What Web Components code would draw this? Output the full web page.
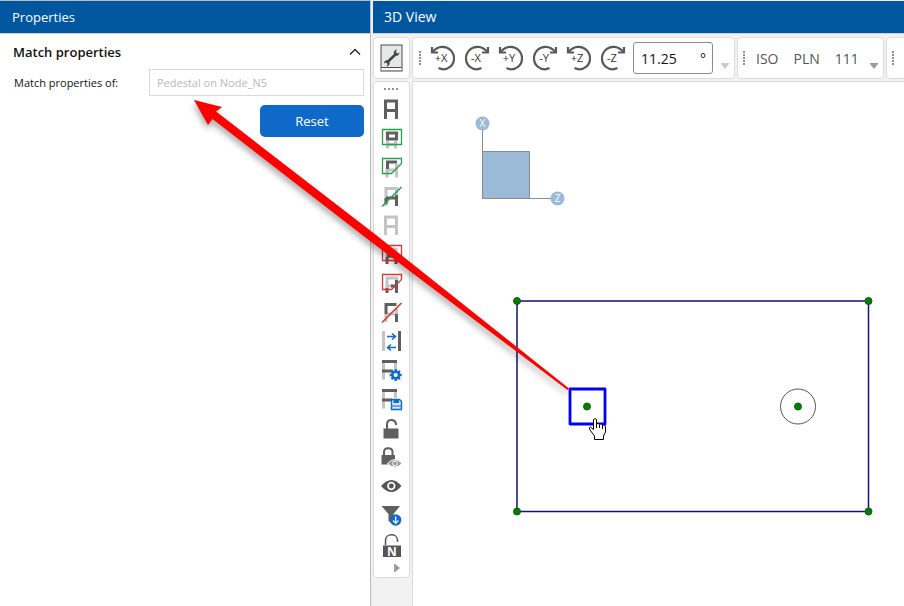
<!DOCTYPE html>
<html lang="en">
<head>
<meta charset="utf-8">
<title>3D View</title>
<style>
html, body { height: 100%; margin: 0; }
body { font-family: "Open Sans", "Noto Sans", sans-serif; font-size: 11px; color: #111; overflow: hidden; }
</style>
</head>
<body>
<app-shell></app-shell>
<script>
const define = (name, html, setup) => customElements.define(name, class extends HTMLElement {
  constructor() {
    super();
    this.attachShadow({ mode: "open" }).innerHTML = html;
  }
  connectedCallback() { if (setup) setup(this, this.shadowRoot); }
});

const D = "#5f5f5f", L = "#c4c4c4", G = "#22a34a", R = "#d93a30", B = "#0f6ac9";
const line = (d, c, w = 3) => `<path d="${d}" fill="none" stroke="${c}" stroke-width="${w}"/>`;
const frame = c => line("M6.500 22V4H17.500V22M6.500 13.500H17.500", c);

const icons = {
  wrench: ["Settings", `<rect x="1" y="-1" width="21" height="26" fill="#e6e8e8" stroke="#4b4b4b"/><path d="M1 21.500H22" stroke="#4b4b4b"/><path d="M1.500 22H21.500V24H1.500z" fill="#fff"/>
    <path d="M6.500 17L17 7" stroke="#454545" stroke-width="2.500"/><path d="M19.500 6.500L17 8L15.500 6.500L17 3.500C14 4 13 6.500 14.500 9C16.500 10.500 19.500 9.500 19.500 6.500M4 17.500L6.500 16L8 17.500L6.500 20.500C9.500 20 10.500 17.500 9 15C7 13.500 4 14.500 4 17.500" fill="#454545"/>`],
  all: ["Show all", frame(D)],
  boxIn: ["Show inside box", line("M8.500 15V22.500M16.500 15V22.500M7 18.500H18", L) + line("M8.500 7H17.500V13H8.500z", D) + line("M3.500 3.500H22.500V18.500H3.500z", G, 1.3)],
  polyIn: ["Show inside polygon", line("M8 14V22.500M17.500 9V22.500M8 15H18", L) + line("M8.500 14V7H18", D) + line("M3.500 3.500H22.500V8.500L12.500 18.500H3.500z", G, 1.3)],
  lineIn: ["Show crossing line", line("M7 3V22M17.500 3V22M7 4.500H17", L) + line("M7 14V20M7 14H17.500M17.500 11V22", D) + line("M3 22.500L22.500 3", G, 1.6)],
  none: ["Hide all", frame(L)],
  boxOut: ["Hide inside box", line("M8 6V18M17 6V18M8 7H17M8 14H17", L) + line("M8 15V22M17 15V22M8 14H17", D) + line("M3.500 3.500H22.500V18.500H3.500z", R, 1.3)],
  polyOut: ["Hide inside polygon", line("M8 18V7H17.500V10M8 15H13", L) + line("M8 17V22M12 15H17.500M17.500 9V22", D) + line("M3.500 3.500H22.500V8.500L12.500 18.500H3.500z", R, 1.3)],
  lineOut: ["Hide crossing line", line("M7 14V22M8 14H17.500M17.500 8V16", L) + line("M7 14V4.500H17.500M17.500 14V22", D) + line("M3 22.500L22.500 3", R, 1.6)],
  swap: ["Invert visibility", line("M4.500 2V22", L) + line("M20.500 2V22", D) + line("M8 7.500H16M13 4.500L16.500 7.500L13 10.500M17 18.500H9M12 15.500L8.500 18.500L12 21.500", B, 1.5)],
  gear: ["Visibility settings", line("M4.500 2V21.500M16.500 4V11", L) + line("M3 3.500H18M3 13H14", D) + `<path d="M16.700 11V23M10.700 17H22.700M12.500 12.800L20.900 21.200M20.900 12.800L12.500 21.200" stroke="${B}" stroke-width="2.400"/><circle cx="16.700" cy="17" r="3.300" fill="#fff" stroke="${B}" stroke-width="2.500"/>`],
  save: ["Save visibility", line("M4.500 2V21.500M16.500 4V11", L) + line("M3 3.500H18M3 13H13", D) + `<path d="M12.500 12.500H20.500L22.500 14.500V22.500H12.500z" fill="#d3e7fc" stroke="${B}" stroke-width="1.400"/><path d="M14.500 12.500V16H20V12.500" fill="${B}"/><path d="M13 19H22" stroke="${B}"/>`],
  unlock: ["Unlock", `<path d="M4.500 12.500H19.500V22.500H4.500z" fill="${D}"/>` + line("M8 13V8.500C8 3 15.500 2.500 17 7.500V9", D, 2)],
  lockEye: ["Lock hidden", `<path d="M2.500 10H16V19.500H2.500z" fill="${D}"/>` + line("M5 10V7C5 2 13.500 2 13.500 7V10", D, 2) + `<path d="M8.500 18.500Q16 10.500 23 18.500Q16 26 8.500 18.500" fill="#999" stroke="#fff"/><circle cx="16" cy="18.500" r="2.400" fill="#999" stroke="#fff"/>`],
  eye: ["Visible", `<path d="M2 12Q12.500 0 22.500 12Q12.500 24 2 12" fill="#555"/><circle cx="12.300" cy="12" r="3.300" fill="#555" stroke="#fff" stroke-width="1.700"/>`],
  filter: ["Filter", `<path d="M2.500 3H21L14.500 11V22L9.500 18V11z" fill="${D}"/><circle cx="16.700" cy="17" r="5.700" fill="${B}"/>` + line("M16.700 13.500V20M14 17.500L16.700 20.300L19.400 17.500", "#fff", 1.2)],
  lockN: ["Lock nodes", `<path d="M4 13.500H22V25H4z" fill="#555"/>` + line("M6.500 13V8.500C6.500 1 18 1 18.500 8V10", "#555", 1.5) + `<text x="13" y="23.500" text-anchor="middle" font-size="12" font-weight="700" fill="#fff">N</text>`]
};

const btn = `<style>
  :host { display: block; }
  button { display: grid; place-items: center; width: 100%; height: 100%; padding: 0; border: 0; background: none; font: inherit; color: inherit; }
  svg { display: block; overflow: visible; }
</style>`;

define("icon-button", btn + `<button type="button"></button>`, (el, root) => {
  const [label, art] = icons[el.getAttribute("name")];
  const b = root.querySelector("button");
  b.setAttribute("aria-label", label);
  b.innerHTML = `<svg width="24" height="24" viewBox="0 0 24 24">${art}</svg>`;
});

define("rotate-button", btn + `<style>:host { width: 34px; height: 34px; }</style><button type="button"></button>`, (el, root) => {
  const axis = el.getAttribute("axis"), plus = axis[0] === "+";
  const b = root.querySelector("button");
  b.setAttribute("aria-label", "Rotate " + axis);
  b.innerHTML = `<svg width="26" height="26" viewBox="0 0 26 26">
    <g fill="none" stroke="#595959" stroke-width="2.200" ${plus ? "" : 'transform="matrix(-1 0 0 1 26 0)"'}>
      <path d="M3 6.500C8 .500 16 .500 20.500 5C25.500 10 25 18 20 21.800C16.500 24.500 12 24.800 8.500 23"/><path d="M2 2V7.500H8"/>
    </g><text x="${plus ? 11 : 12}" y="17" text-anchor="middle" font-size="11" fill="#333">${axis}</text></svg>`;
});

define("grip-dots", `<style>
  :host { display: block; width: 2px; height: 14px; background: repeating-linear-gradient(#8f8f94 0 2px, transparent 2px 3px); }
  :host([flat]) { width: 14px; height: 2px; background: repeating-linear-gradient(90deg, #8f8f94 0 2px, transparent 2px 4px); }
</style>`);

define("tool-group", `<style>
  :host { display: flex; align-items: center; box-sizing: border-box; background: #fff; border: 1px solid #dcdcdc; border-radius: 4px; }
  :host([column]) { flex-direction: column; align-items: stretch; padding-right: 1px; }
</style><slot></slot>`);

define("panel-header", `<style>
  :host { display: block; background: #00579f; border-bottom: 1px solid #d0d0d0; }
  h2 { margin: 0; padding: 0 11px; font-size: 14px; line-height: 32px; font-weight: 400; color: #fff; }
  :host([compact]) h2 { padding: 0 12px; font-size: 13px; }
</style><h2><slot></slot></h2>`);

define("property-panel", `<style>
  :host { display: block; background: #fff; }
  header { display: flex; align-items: center; justify-content: space-between; padding: 0 7px 0 13px; height: 35px; }
  h3 { margin: 0; font-size: 13px; font-weight: 600; color: #111; }
  header button { width: 16px; height: 16px; padding: 0; border: 0; background: none; }
  svg { display: block; }
  .row { display: grid; grid-template-columns: 135px 1fr; align-items: center; padding: 0 6px 0 14px; }
  input { box-sizing: border-box; width: 100%; height: 27px; padding: 0 7px; border: 1px solid #d9d9d9; background: #fff; font: inherit; color: #b8b8b8; }
  .actions { display: flex; justify-content: flex-end; padding: 9px 6px; }
  .reset { width: 104px; height: 32px; border: 0; border-radius: 5px; background: #0f69c9; color: #fff; font: inherit; font-size: 13px; }
</style>
<panel-header compact>Properties</panel-header>
<header><h3>Match properties</h3><button type="button" aria-label="Collapse"><svg width="16" height="16"><path d="M3 10.500L8 5.500L13 10.500" fill="none" stroke="#222" stroke-width="1.300"/></svg></button></header>
<div class="row"><label for="source">Match properties of:</label><input id="source" value="Pedestal on Node_N5" disabled></div>
<div class="actions"><button class="reset" type="button">Reset</button></div>`);

define("view-toolbar", `<style>
  :host { display: flex; gap: 2px; height: 42px; overflow: hidden; }
  tool-group { flex: none; }
  icon-button { width: 35px; height: 35px; }
  .rotate { padding: 0 4px 0 6px; }
  .rotate rotate-button:first-of-type { margin-left: 5px; }
  .field { display: flex; align-items: center; box-sizing: border-box; width: 80px; height: 32px; margin-left: 3px; padding: 0 6px; border: 1px solid #8c8c8c; border-radius: 3px; font-size: 14px; }
  .field input { min-width: 0; flex: 1; border: 0; padding: 0 0 0 1px; font: inherit; color: #111; background: none; outline: 0; }
  .more { align-self: flex-end; display: grid; width: 10px; height: 18px; padding: 0; border: 0; background: none; margin: 0 0 3px 7px; place-items: center; color: #c9c9ce; }
  .views { gap: 15px; padding: 0 4px 0 5px; color: #555; }
  .views .text { padding: 0; border: 0; background: none; font: inherit; font-size: 14px; color: inherit; }
  .views grip-dots { margin-right: -4px; }
  .views .more { color: #9a9aa0; margin-left: -5px; }
  .last { flex: 1; padding: 0 5px; margin-right: -4px; }
</style>
<tool-group><icon-button name="wrench"></icon-button></tool-group>
<tool-group class="rotate"><grip-dots></grip-dots>
  <rotate-button axis="+X"></rotate-button><rotate-button axis="-X"></rotate-button>
  <rotate-button axis="+Y"></rotate-button><rotate-button axis="-Y"></rotate-button>
  <rotate-button axis="+Z"></rotate-button><rotate-button axis="-Z"></rotate-button>
  <label class="field"><input value="11.25" aria-label="Rotation angle"><span>°</span></label>
  <button class="more" type="button" aria-label="More"><svg width="8" height="6"><path d="M0 0H8V1L4 6L0 1z" fill="currentColor"/></svg></button>
</tool-group>
<tool-group class="views"><grip-dots></grip-dots>
  <button class="text" type="button">ISO</button><button class="text" type="button">PLN</button><button class="text" type="button">111</button>
  <button class="more" type="button" aria-label="More"><svg width="8" height="6"><path d="M0 0H8V1L4 6L0 1z" fill="currentColor"/></svg></button>
</tool-group>
<tool-group class="last"><grip-dots></grip-dots></tool-group>`);

define("visibility-toolbar", `<style>
  :host { display: block; }
  grip-dots { align-self: center; margin: 6px 0 4px; }
  icon-button { height: 29px; }
  .next { display: grid; place-items: center end; padding: 0 8px 0 0; height: 19px; border: 0; background: none; }
</style>
<tool-group column><grip-dots flat></grip-dots>
${Object.keys(icons).slice(1).map(n => `<icon-button name="${n}"></icon-button>`).join("")}
<button class="next" type="button" aria-label="More"><svg width="6" height="8"><path d="M0 0H1L6 4L1 8H0z" fill="#9c9ca0"/></svg></button>
</tool-group>`);

define("model-canvas", `<style>
  :host { display: block; background: #fff; border: solid #dcdcdc; border-width: 1px 0 0 1px; overflow: hidden; }
  svg { display: block; }
</style>
<svg width="100%" height="100%">
  <g transform="translate(-413 -82)">
    <path d="M482.500 130V198.500H551" fill="none" stroke="#8a8a8a"/>
    <path d="M482.500 151.500H529.500V198.500H482.500z" fill="#9bbad7" stroke="#8a8a8a"/>
    <g fill="#9bbad7"><circle cx="482.500" cy="123.500" r="7"/><circle cx="557.500" cy="198.500" r="7"/></g>
    <g fill="#fff" font-size="10" text-anchor="middle"><text x="482.500" y="127">X</text><text x="557.500" y="202">Z</text></g>
    <path d="M517 301H868.500V511.500H517z" fill="none" stroke="#10107f" stroke-width="1.500"/>
    <circle cx="798" cy="406.500" r="17.500" fill="none" stroke="#555"/>
    <path d="M570 389H605V424H570z" fill="none" stroke="#0000fa" stroke-width="2.800" stroke-linejoin="round"/>
    <g fill="#008000" stroke="#165c16" stroke-width="1"><circle cx="517" cy="301" r="3.500"/><circle cx="868.500" cy="301" r="3.500"/><circle cx="517" cy="511.500" r="3.500"/><circle cx="868.500" cy="511.500" r="3.500"/><circle cx="587" cy="406.500" r="3.500"/><circle cx="798" cy="406.500" r="3.500"/></g>
    <path d="M593.500 419.500Q595 417.500 596.500 419.500V424Q598 422.500 599.500 424.500Q601 423 602.500 425Q605.500 424 605.500 427V432L603.500 436V439.500H594.500V436L590 430Q588.500 427 590.500 427L593.500 429.500z" fill="#fff" stroke="#000"/>
    <path d="M596.500 424V428M599.500 425V428M602.500 425V429" stroke="#000"/>
  </g>
</svg>`);

define("view-panel", `<style>
  :host { display: flex; flex-direction: column; min-width: 0; background: #f2f2f2; }
  view-toolbar { margin: 3px 0 2px; }
  .body { flex: 1; display: grid; grid-template-columns: 37px 1fr; gap: 2px; min-height: 0; }
</style>
<panel-header>3D View</panel-header>
<view-toolbar></view-toolbar>
<div class="body"><visibility-toolbar></visibility-toolbar><model-canvas></model-canvas></div>`);

define("callout-arrow", `<style>
  :host { position: absolute; inset: 0; pointer-events: none; }
  svg { display: block; width: 100%; height: 100%; filter: drop-shadow(-1px 4px 3px #0005); }
</style>
<svg><path d="M194 100L222 107L216 111.500L376 235L569 388.500L567.500 390L370 241L212.500 119L208 125z" fill="#f00"/></svg>`);

define("app-shell", `<style>
  :host { position: relative; display: grid; grid-template-columns: 370px 1fr; column-gap: 3px; box-sizing: border-box; min-height: 100vh; padding-top: 1px; background: linear-gradient(90deg, #bdbdbd 0 371px, #f0f0f0 371px); }
</style>
<property-panel></property-panel><view-panel></view-panel><callout-arrow></callout-arrow>`);
</script>
</body>
</html>
